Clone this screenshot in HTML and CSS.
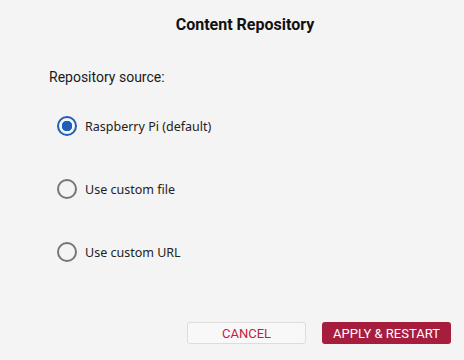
FILE: index.html
```html
<!DOCTYPE html>
<html lang="en">
    <head>
        <meta charset="UTF-8">
        <meta name="viewport" content="width=device-width, initial-scale=1.0">
        <title>Content Repository</title>
        <link rel="stylesheet" href="styles.css">
    </head>
    <body>
        <div class="clDialogo">
            <h1 class="clTitulo">Content Repository</h1>
            <fieldset class="clFonte">
                <legend class="clLegenda">Repository source:</legend>
                <label class="clOpcao">
                    <input type="radio" name="nmFonte" value="default" checked>
                    <span class="clRadio"></span>
                    <span>Raspberry Pi (default)</span>
                </label>
                <label class="clOpcao">
                    <input type="radio" name="nmFonte" value="file">
                    <span class="clRadio"></span>
                    <span>Use custom file</span>
                </label>
                <label class="clOpcao">
                    <input type="radio" name="nmFonte" value="url">
                    <span class="clRadio"></span>
                    <span>Use custom URL</span>
                </label>
            </fieldset>
            <div class="clBotoes">
                <button type="button" class="clBotao clCancelar">CANCEL</button>
                <button type="button" class="clBotao clAplicar">APPLY &amp; RESTART</button>
            </div>
        </div>
    </body>
</html>
```
FILE: styles.css
```css
/*Reset*/
html,
body,
h1,
fieldset,
legend {
margin: 0;
padding: 0;
}

html {
box-sizing: border-box;
}

*, *::before, *::after {
box-sizing: inherit;
}

/*Dialogo*/

body{
    background-color: #f4f4f4;
    font-family: Roboto, "Liberation Sans", sans-serif;
    color: #1a1a1a;
}

.clDialogo{
    display: flex;
    flex-direction: column;
    height: 360px;
    padding: 14px 13px 16px 49px;
}

.clTitulo{
    font-size: 16px;
    font-weight: bold;
    text-align: center;
    line-height: 22px;
    color: #111;
    margin-left: -10px;
}

.clFonte{
    border: none;
    margin-top: 31px;
    display: flex;
    flex-direction: column;
}

.clLegenda{
    font-size: 14px;
    line-height: 20px;
    padding: 0;
    margin-bottom: 28px;
}

.clOpcao{
    display: flex;
    align-items: center;
    gap: 8px;
    height: 22px;
    margin-left: 8px;
    margin-bottom: 41px;
    font-family: "Noto Sans", sans-serif;
    font-size: 12.5px;
    color: #222;
}

.clOpcao input{
    display: none;
}

.clRadio{
    width: 20px;
    height: 20px;
    border-radius: 50%;
    border: 2px solid #767676;
}

.clOpcao input:checked + .clRadio{
    border-color: #1f5fb5;
    background: radial-gradient(circle, #1f5fb5 0 5px, transparent 5.5px);
}

.clBotoes{
    margin-top: auto;
    display: flex;
    justify-content: flex-end;
    gap: 16px;
}

.clBotao{
    height: 22px;
    border-radius: 3px;
    font-family: Roboto, sans-serif;
    font-size: 13px;
    padding: 0;
}

.clCancelar{
    width: 119px;
    background-color: #f8f8f8;
    border: 1px solid #dcdcdc;
    color: #c41d40;
}

.clAplicar{
    width: 129px;
    background-color: #a71d3e;
    border: none;
    color: #fff;
}
```
